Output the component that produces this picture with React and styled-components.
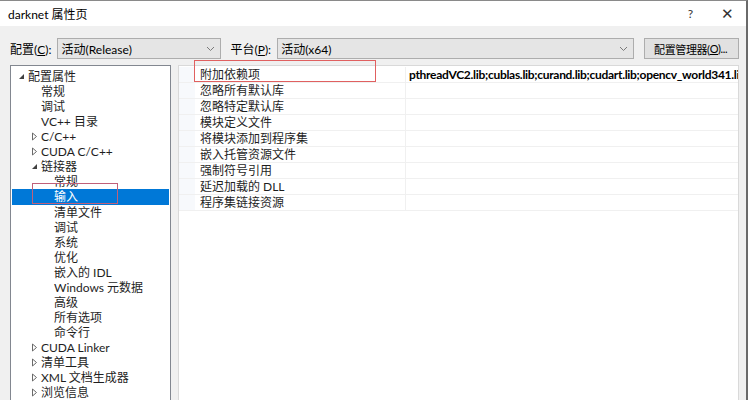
import React from 'react'
import styled, { createGlobalStyle } from 'styled-components'

const Global = createGlobalStyle`
	html, body {
		margin: 0;
		padding: 0;
		background: #f0f0f0;
	}
	body {
		font-family: Lato, "Noto Sans CJK SC", sans-serif;
		font-size: 12px;
		color: #000;
	}
`

const Win = styled.div`
	width: 748px;
	height: 400px;
	box-sizing: border-box;
	overflow: hidden;
	background: #f0f0f0;
	border-top: 1px solid #8a8a8a;
	border-right: 2px solid #6a6a6a;
	display: flex;
	flex-direction: column;
`

const TitleBar = styled.div`
	height: 25px;
	flex: none;
	background: #fff;
	display: flex;
	align-items: center;
	padding-left: 8px;
	font-size: 12px;
`

const Title = styled.div`
	flex: 1;
`

const TitleBtn = styled.div`
	width: 37px;
	text-align: center;
	color: #333;
	font-size: ${p => (p.big ? '15px' : '12px')};
	display: flex;
	justify-content: center;
	align-items: center;
`

const Toolbar = styled.div`
	margin-top: 12px;
	height: 21px;
	flex: none;
	display: flex;
	align-items: center;
	padding-left: 10px;
`

const Label = styled.span`
	margin-right: 6px;
	u {
		text-decoration: underline;
	}
`

const Combo = styled.div`
	width: ${p => p.w}px;
	height: 21px;
	box-sizing: border-box;
	background: #e5e5e5;
	border: 1px solid #adadad;
	display: flex;
	align-items: center;
	padding-left: 3px;
	padding-right: 5px;
	margin-right: ${p => p.mr}px;
`

const ComboText = styled.span`
	flex: 1;
`

const Button = styled.div`
	width: 95px;
	height: 21px;
	box-sizing: border-box;
	background: #e1e1e1;
	border: 1px solid #adadad;
	display: flex;
	align-items: center;
	justify-content: center;
	white-space: nowrap;
	font-size: 11px;
	letter-spacing: -0.4px;
	padding-right: 2px;
`

const Main = styled.div`
	margin-top: 6px;
	flex: 1;
	display: flex;
	padding-left: 10px;
	gap: 7px;
	min-height: 0;
`

const Tree = styled.div`
	width: 161px;
	flex: none;
	box-sizing: border-box;
	background: #fff;
	border: 1px solid #828790;
	border-bottom: none;
	padding-top: 3px;
	position: relative;
`

const Node = styled.div`
	height: ${p => (p.selected ? 16 : 15)}px;
	line-height: ${p => (p.selected ? 16 : 15)}px;
	display: flex;
	align-items: center;
	padding-left: ${p => p.level * 13 + 3}px;
	margin: 0 1px;
	background: ${p => (p.selected ? '#0078d7' : 'transparent')};
	color: ${p => (p.selected ? '#fff' : '#1e1e1e')};
	white-space: nowrap;
	overflow: hidden;
`

const Expander = styled.span`
	width: 13px;
	flex: none;
	display: flex;
	align-items: center;
	justify-content: center;
`

const Grid = styled.div`
	width: 561px;
	flex: none;
	box-sizing: border-box;
	background: #fff;
	border: 1px solid #d9d9d9;
	border-bottom: none;
	position: relative;
	padding-top: 1px;
`

const Row = styled.div`
	display: flex;
	height: 16px;
	line-height: 15px;
	border-bottom: 1px solid #f0f0f0;
	box-sizing: border-box;
	overflow: hidden;
`

const Gutter = styled.div`
	width: 16px;
	flex: none;
	background: #f7f9fc;
`

const NameCell = styled.div`
	width: 205px;
	flex: none;
	padding-left: 5px;
	border-right: 1px solid #f0f0f0;
	white-space: nowrap;
	color: #1e1e1e;
`

const ValueCell = styled.div`
	flex: 1;
	padding-left: 3px;
	white-space: nowrap;
	overflow: hidden;
	font-weight: ${p => (p.bold ? 700 : 400)};
	letter-spacing: -0.3px;
`

const Mark = styled.div`
	position: absolute;
	left: ${p => p.x}px;
	top: ${p => p.y}px;
	width: ${p => p.w}px;
	height: ${p => p.h}px;
	border: 1px solid ${p => p.c};
	box-sizing: border-box;
	pointer-events: none;
`

const Chevron = () => (
	<svg width="9" height="6" viewBox="0 0 9 6">
		<path d="M1 1 L4.5 4.5 L8 1" fill="none" stroke="#7a7a7a" strokeWidth="1" />
	</svg>
)

const Open = () => (
	<svg width="7" height="7" viewBox="0 0 7 7">
		<path d="M6 1 L6 6 L1 6 Z" fill="#404040" />
	</svg>
)

const Closed = () => (
	<svg width="7" height="9" viewBox="0 0 7 9">
		<path d="M1.5 1 L5.5 4.5 L1.5 8 Z" fill="none" stroke="#6a6a6a" strokeWidth="1" />
	</svg>
)

const tree = [
	{ t: '配置属性', l: 0, e: 'open' },
	{ t: '常规', l: 1 },
	{ t: '调试', l: 1 },
	{ t: 'VC++ 目录', l: 1 },
	{ t: 'C/C++', l: 1, e: 'closed' },
	{ t: 'CUDA C/C++', l: 1, e: 'closed' },
	{ t: '链接器', l: 1, e: 'open' },
	{ t: '常规', l: 2 },
	{ t: '输入', l: 2, sel: true },
	{ t: '清单文件', l: 2 },
	{ t: '调试', l: 2 },
	{ t: '系统', l: 2 },
	{ t: '优化', l: 2 },
	{ t: '嵌入的 IDL', l: 2 },
	{ t: 'Windows 元数据', l: 2 },
	{ t: '高级', l: 2 },
	{ t: '所有选项', l: 2 },
	{ t: '命令行', l: 2 },
	{ t: 'CUDA Linker', l: 1, e: 'closed' },
	{ t: '清单工具', l: 1, e: 'closed' },
	{ t: 'XML 文档生成器', l: 1, e: 'closed' },
	{ t: '浏览信息', l: 1, e: 'closed' }
]

const props = [
	['附加依赖项', 'pthreadVC2.lib;cublas.lib;curand.lib;cudart.lib;opencv_world341.lib;%(AdditionalDependencies)'],
	['忽略所有默认库', ''],
	['忽略特定默认库', ''],
	['模块定义文件', ''],
	['将模块添加到程序集', ''],
	['嵌入托管资源文件', ''],
	['强制符号引用', ''],
	['延迟加载的 DLL', ''],
	['程序集链接资源', '']
]

const App = () => (
	<Win>
		<Global />
		<TitleBar>
			<Title>darknet 属性页</Title>
			<TitleBtn>?</TitleBtn>
			<TitleBtn big>✕</TitleBtn>
		</TitleBar>
		<Toolbar>
			<Label>
				配置(<u>C</u>):
			</Label>
			<Combo w={164} mr={9}>
				<ComboText>活动(Release)</ComboText>
				<Chevron />
			</Combo>
			<Label>
				平台(<u>P</u>):
			</Label>
			<Combo w={357} mr={10}>
				<ComboText>活动(x64)</ComboText>
				<Chevron />
			</Combo>
			<Button>
				配置管理器(<u>O</u>)...
			</Button>
		</Toolbar>
		<Main>
			<Tree>
				{tree.map((n, i) => (
					<Node key={i} level={n.l} selected={n.sel}>
						<Expander>{n.e === 'open' ? <Open /> : n.e === 'closed' ? <Closed /> : null}</Expander>
						{n.t}
					</Node>
				))}
				<Mark x={21} y={117} w={86} h={21} c="#c0607a" />
			</Tree>
			<Grid>
				{props.map(([name, value], i) => (
					<Row key={i}>
						<Gutter />
						<NameCell>{name}</NameCell>
						<ValueCell bold={i === 0}>{value}</ValueCell>
					</Row>
				))}
				<Mark x={15} y={-6} w={182} h={22} c="#e06060" />
			</Grid>
		</Main>
	</Win>
)

export default App
